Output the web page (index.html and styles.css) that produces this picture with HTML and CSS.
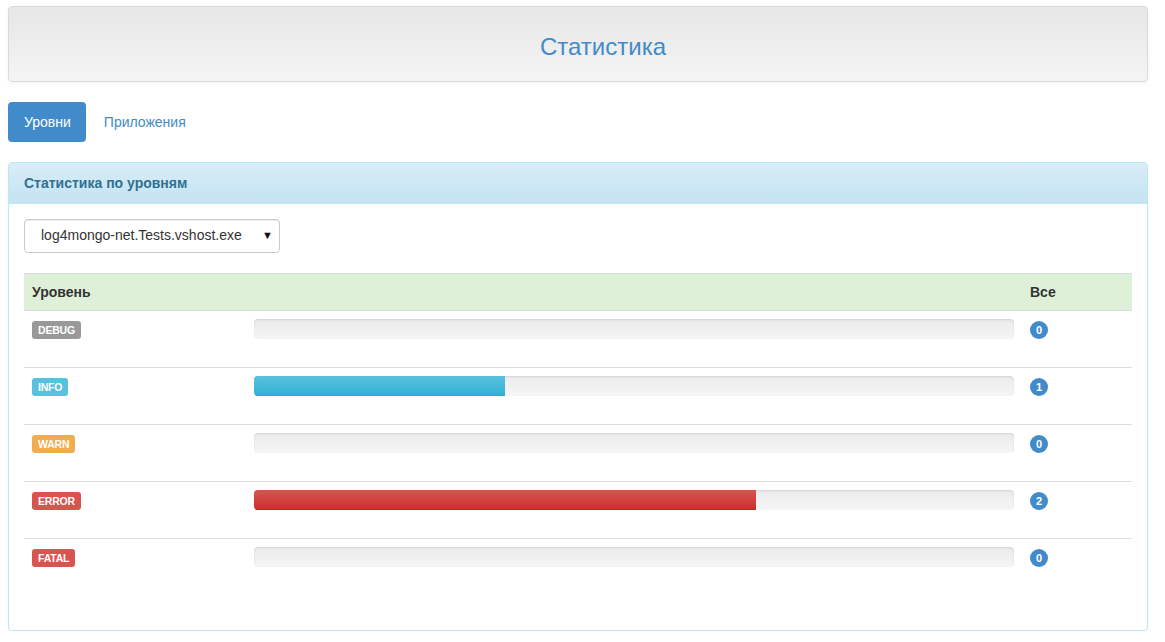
FILE: index.html
```html
<!DOCTYPE html>
<html lang="ru">
<head>
<meta charset="utf-8">
<title>Статистика</title>
<link rel="stylesheet" href="styles.css">
</head>
<body>
<div class="container">
  <header class="header">
    <h1 class="header-title">Статистика</h1>
  </header>

  <ul class="pills">
    <li><a class="pill active" href="#">Уровни</a></li>
    <li><a class="pill" href="#">Приложения</a></li>
  </ul>

  <section class="panel">
    <div class="panel-heading">Статистика по уровням</div>
    <div class="panel-body">
      <div class="select">
        <span class="select-text">log4mongo-net.Tests.vshost.exe</span>
        <span class="select-arrow">▼</span>
      </div>

      <table class="stats">
        <thead>
          <tr>
            <th class="col-level">Уровень</th>
            <th class="col-bar"></th>
            <th class="col-count">Все</th>
          </tr>
        </thead>
        <tbody>
          <tr>
            <td><span class="label label-debug">DEBUG</span></td>
            <td><div class="progress"><div class="bar bar-info" style="width:0%"></div></div></td>
            <td><span class="badge">0</span></td>
          </tr>
          <tr>
            <td><span class="label label-info">INFO</span></td>
            <td><div class="progress"><div class="bar bar-info" style="width:33%"></div></div></td>
            <td><span class="badge">1</span></td>
          </tr>
          <tr>
            <td><span class="label label-warn">WARN</span></td>
            <td><div class="progress"><div class="bar bar-info" style="width:0%"></div></div></td>
            <td><span class="badge">0</span></td>
          </tr>
          <tr>
            <td><span class="label label-error">ERROR</span></td>
            <td><div class="progress"><div class="bar bar-danger" style="width:66%"></div></div></td>
            <td><span class="badge">2</span></td>
          </tr>
          <tr>
            <td><span class="label label-error">FATAL</span></td>
            <td><div class="progress"><div class="bar bar-danger" style="width:0%"></div></div></td>
            <td><span class="badge">0</span></td>
          </tr>
        </tbody>
      </table>
    </div>
  </section>
</div>
</body>
</html>
```

FILE: styles.css
```css
* { box-sizing: border-box; }

html, body {
  margin: 0;
  padding: 0;
  background: #fff;
}

body {
  font-family: "Liberation Sans", Arial, Helvetica, sans-serif;
  font-size: 14px;
  line-height: 1.428571;
  color: #333;
}

.container {
  width: 1140px;
  margin: 0 0 0 8px;
  padding-top: 6px;
}

.header {
  height: 76px;
  border: 1px solid #d9d9d9;
  border-radius: 4px;
  background: linear-gradient(to bottom, #e6e6e6 0%, #f4f4f4 100%);
  box-shadow: inset 0 1px 0 rgba(255,255,255,.15), 0 1px 5px rgba(0,0,0,.05);
  display: flex;
  align-items: center;
  justify-content: center;
  padding-left: 50px;
}

.header-title {
  margin: 6px 0 0 0;
  font-size: 24px;
  font-weight: normal;
  line-height: 1.1;
  color: #428bca;
}

.pills {
  list-style: none;
  margin: 20px 0 20px 0;
  padding: 0;
  display: flex;
  gap: 2px;
}

.pill {
  display: block;
  padding: 10px 15px 10px 16px;
  border-radius: 4px;
  color: #428bca;
  text-decoration: none;
  line-height: 20px;
}

.pill.active {
  background: #428bca;
  color: #fff;
}

.panel {
  border: 1px solid #bce8f1;
  border-radius: 4px;
  background: #fff;
  box-shadow: 0 1px 2px rgba(0,0,0,.05);
}

.panel-heading {
  padding: 10px 15px;
  height: 41px;
  border-bottom: 1px solid #bce8f1;
  border-radius: 3px 3px 0 0;
  background: linear-gradient(to bottom, #d9edf7 0%, #c4e3f3 100%);
  color: #31708f;
  font-weight: bold;
  font-size: 14px;
  line-height: 20px;
}

.panel-body {
  padding: 15px;
}

.select {
  width: 256px;
  height: 34px;
  border: 1px solid #ccc;
  border-radius: 4px;
  box-shadow: inset 0 1px 1px rgba(0,0,0,.075);
  display: flex;
  align-items: center;
  justify-content: space-between;
  padding: 0 6px 0 16px;
  margin-bottom: 20px;
  color: #333;
  font-size: 14px;
}

.select-arrow {
  font-size: 11px;
  color: #111;
}

.stats {
  width: 100%;
  border-collapse: collapse;
  border-spacing: 0;
  margin-bottom: 20px;
}

.stats th {
  text-align: left;
  padding: 8px;
  line-height: 20px;
  background: #dff0d8;
  border-top: 1px solid #ddd;
  border-bottom: 1px solid #ddd;
  font-weight: bold;
  vertical-align: bottom;
}

.col-level { width: 222px; }
.col-count { width: 110px; }

.stats td {
  padding: 8px;
  line-height: 20px;
  vertical-align: top;
  border-top: 1px solid #ddd;
}

.stats tbody tr:first-child td { border-top: 0; }

.label {
  display: inline-block;
  padding: 0 6px;
  font-size: 10.5px;
  font-weight: bold;
  line-height: 18px;
  height: 18px;
  color: #fff;
  border-radius: 3px;
  vertical-align: top;
  margin-top: 2px;
  letter-spacing: -0.2px;
}

.label-debug { background: #999; }
.label-info { background: #5bc0de; }
.label-warn { background: #f0ad4e; }
.label-error { background: #d9534f; }

.progress {
  height: 20px;
  margin-bottom: 20px;
  border-radius: 4px;
  overflow: hidden;
  background: linear-gradient(to bottom, #ebebeb 0%, #f5f5f5 100%);
  box-shadow: inset 0 1px 2px rgba(0,0,0,.1);
}

.bar {
  height: 100%;
}

.bar-info {
  background: linear-gradient(to bottom, #5bc0de 0%, #31b0d5 100%);
  box-shadow: inset 0 -1px 0 #2aabd2;
}

.bar-danger {
  background: linear-gradient(to bottom, #d9534f 0%, #c9302c 100%);
  box-shadow: inset 0 -1px 0 #b52b27;
}

.badge {
  display: inline-block;
  min-width: 18px;
  height: 18px;
  padding: 0 5px;
  margin-top: 2px;
  border-radius: 9px;
  background: #428bca;
  color: #fff;
  font-size: 11px;
  font-weight: bold;
  line-height: 18px;
  text-align: center;
  vertical-align: top;
}
```
